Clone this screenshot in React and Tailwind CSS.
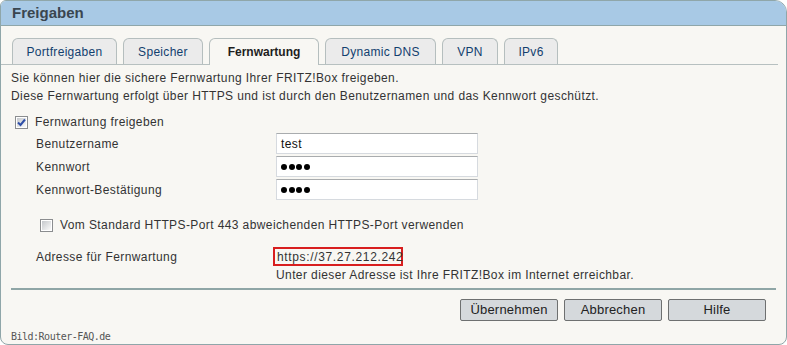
import React from "react";

const tabs = [
  { label: "Portfreigaben", w: "w-[105px]" },
  { label: "Speicher", w: "w-[80px]" },
  { label: "Fernwartung", w: "w-[110px]", active: true },
  { label: "Dynamic DNS", w: "w-[111px]" },
  { label: "VPN", w: "w-[56px]" },
  { label: "IPv6", w: "w-[54px]" },
];

const Checkbox = ({ checked }) => (
  <span className="w-[13px] h-[13px] shrink-0 border border-[#8b8d8f] bg-white p-px flex">
    <span className="flex-1 bg-linear-to-br from-[#c5c8cc] to-[#fbfbfb] flex items-center justify-center">
      {checked && (
        <svg width="9" height="9" viewBox="0 0 9 9">
          <path d="M1 4.5 L3.5 7 L8 1.5" fill="none" stroke="#2f4fa8" strokeWidth="2" />
        </svg>
      )}
    </span>
  </span>
);

const Dots = () => (
  <span className="flex gap-[1.5px]">
    {[0, 1, 2, 3].map((i) => (
      <span key={i} className="w-[6px] h-[6px] rounded-full bg-black" />
    ))}
  </span>
);

const Field = ({ label, children }) => (
  <div className="flex items-center h-[21px] pl-[25px]">
    <span className="w-[240px]">{label}</span>
    <div className="w-[202px] h-[21px] bg-white border border-[#d6dadf] border-t-[#a9acae] flex items-center pl-[4px] text-[#111]">
      {children}
    </div>
  </div>
);

export default function App() {
  return (
    <div className="w-[787px] h-[345px] bg-white font-['Liberation_Sans',Arial,sans-serif]">
      <div className="w-[787px] h-[345px] bg-[#f8f7f3] border border-[#8fa6a9] rounded-tl-[6px] rounded-tr-[12px] rounded-b-[8px] overflow-hidden flex flex-col">
        {/* header */}
        <div className="h-[25px] shrink-0 bg-[#a8c9e5] border-b border-[#8fa6a9] flex items-center pl-[11px] text-[15px] font-bold text-[#3a4650]">
          Freigaben
        </div>

        {/* tabs */}
        <div className="pt-[12px] shrink-0">
          <div className="flex items-end gap-[6px] pl-[11px] mr-[8px] h-[27px] border-b border-[#b7c0c0]">
            {tabs.map((t) =>
              t.active ? (
                <div
                  key={t.label}
                  className={`${t.w} h-[27px] -mb-px rounded-t-[6px] border border-b-0 border-[#b5bebe] bg-[#f8f7f3] flex items-center justify-center text-[12px] font-bold text-[#1e1e1e]`}
                >
                  {t.label}
                </div>
              ) : (
                <div
                  key={t.label}
                  className={`${t.w} h-[26px] rounded-t-[6px] border border-b-0 border-[#b5bebe] bg-[#ebebeb] flex items-center justify-center text-[12px] tracking-[0.3px] text-[#12406e]`}
                >
                  {t.label}
                </div>
              )
            )}
          </div>
        </div>

        {/* content */}
        <div className="flex-1 flex flex-col px-[10px] text-[12px] tracking-[0.4px] text-[#333] leading-[18px]">
          <p className="mt-[4px]">
            Sie können hier die sichere Fernwartung Ihrer FRITZ!Box freigeben.
            <br />
            Diese Fernwartung erfolgt über HTTPS und ist durch den Benutzernamen und das Kennwort geschützt.
          </p>

          <div className="mt-[8px] h-[18px] flex items-center pl-[4px] gap-[7px]">
            <Checkbox checked />
            <span>Fernwartung freigeben</span>
          </div>

          <div className="mt-[2px] flex flex-col gap-[2px]">
            <Field label="Benutzername">test</Field>
            <Field label="Kennwort">
              <Dots />
            </Field>
            <Field label="Kennwort-Bestätigung">
              <Dots />
            </Field>
          </div>

          <div className="mt-[16px] h-[18px] flex items-center pl-[29px] gap-[7px]">
            <Checkbox />
            <span>Vom Standard HTTPS-Port 443 abweichenden HTTPS-Port verwenden</span>
          </div>

          <div className="mt-[13px] flex items-center h-[19px] pl-[25px]">
            <span className="w-[237px]">Adresse für Fernwartung</span>
            <span className="w-[130px] h-[19px] border-2 border-[#d81e1e] flex items-center pl-[2px] tracking-[0.65px] whitespace-nowrap">
              https://37.27.212.242
            </span>
          </div>
          <div className="pl-[265px]">Unter dieser Adresse ist Ihre FRITZ!Box im Internet erreichbar.</div>

          <div className="mt-[4px] h-[2px] bg-[#8fa6a6]" />

          <div className="mt-[9px] flex justify-end gap-[6px] pr-[10px]">
            {["Übernehmen", "Abbrechen", "Hilfe"].map((b) => (
              <button
                key={b}
                className="w-[98px] h-[22px] bg-[#d5d9dc] border border-[#6e7070] rounded-[2px] text-[13px] tracking-[0.2px] text-[#222] flex items-center justify-center"
              >
                {b}
              </button>
            ))}
          </div>

          <div className="mt-auto pb-px leading-[12px] text-[10px] tracking-[-0.5px] text-[#555] font-['DejaVu_Sans_Mono',monospace]">
            Bild:Router-FAQ.de
          </div>
        </div>
      </div>
    </div>
  );
}
